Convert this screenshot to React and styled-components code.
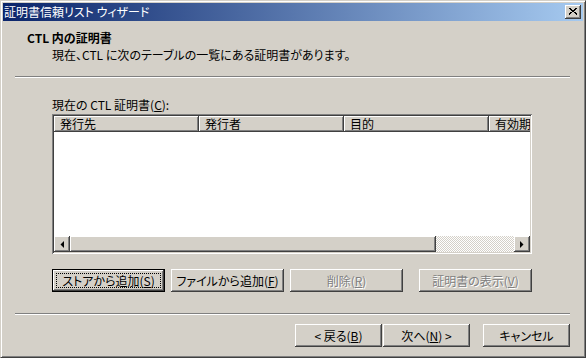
import React from 'react';
import styled, { createGlobalStyle } from 'styled-components';

const GlobalStyle = createGlobalStyle`
  html, body {
    margin: 0;
    padding: 0;
    background: #d4d0c8;
  }
`;

const raised = `
  box-shadow: inset -1px -1px #404040, inset 1px 1px #ffffff,
    inset -2px -2px #808080, inset 2px 2px #d4d0c8;
`;

const Window = styled.div`
  width: 586px;
  height: 358px;
  box-sizing: border-box;
  background: #d4d0c8;
  border: 1px solid;
  border-color: #d4d0c8 #404040 #404040 #d4d0c8;
  box-shadow: inset 1px 1px #ffffff, inset -1px -1px #808080;
  padding: 2px;
  display: flex;
  flex-direction: column;
  font-family: "Noto Sans CJK JP", sans-serif;
  font-size: 12px;
  font-feature-settings: "palt";
  color: #000;
`;

const TitleBar = styled.div`
  height: 18px;
  flex: none;
  display: flex;
  align-items: center;
  padding: 0 2px 0 1px;
  background: linear-gradient(to right, #0a246a, #a6caf0);
  color: #fff;
  line-height: 18px;
`;

const CloseButton = styled.div`
  margin-left: auto;
  width: 16px;
  height: 14px;
  background: #d4d0c8;
  ${raised}
  display: flex;
  align-items: center;
  justify-content: center;
  padding-bottom: 1px;
  box-sizing: border-box;
`;

const Header = styled.div`
  height: 55px;
  flex: none;
  box-sizing: border-box;
  padding: 9px 0 0 24px;
  line-height: 16px;
`;

const Heading = styled.div`
  font-weight: bold;
`;

const Subtitle = styled.div`
  margin-top: 1px;
  padding-left: 25px;
`;

const Separator = styled.div`
  flex: none;
  height: 0;
  border-top: 1px solid #808080;
  border-bottom: 1px solid #ffffff;
  margin: ${p => p.$top || 0}px 13px 0 12px;
`;

const Content = styled.div`
  padding: 19px 0 0 49px;
  line-height: 16px;
`;

const ListBox = styled.div`
  margin-top: 1px;
  width: 480px;
  height: 140px;
  box-sizing: border-box;
  padding: 2px;
  background: #fff;
  box-shadow: inset 1px 1px #808080, inset -1px -1px #ffffff,
    inset 2px 2px #404040, inset -2px -2px #d4d0c8;
  display: grid;
  grid-template-rows: 16px 1fr 16px;
  overflow: hidden;
`;

const HeaderRow = styled.div`
  display: flex;
  overflow: hidden;
  background: #d4d0c8;
`;

const ColumnHeader = styled.div`
  flex: 0 0 145px;
  height: 16px;
  box-sizing: border-box;
  padding-left: 6px;
  line-height: 16px;
  white-space: nowrap;
  overflow: hidden;
  ${raised}
`;

const ListBody = styled.div`
  background: #fff;
`;

const ScrollBar = styled.div`
  display: flex;
  height: 16px;
`;

const ArrowButton = styled.div`
  flex: 0 0 16px;
  height: 16px;
  background: #d4d0c8;
  ${raised}
  display: flex;
  align-items: center;
  justify-content: center;
`;

const Thumb = styled.div`
  flex: 0 0 366px;
  background: #d4d0c8;
  ${raised}
`;

const Track = styled.div`
  flex: 1;
  background: repeating-conic-gradient(#ffffff 0 25%, #d4d0c8 0 50%) 0 0 / 2px 2px;
`;

const ButtonRow = styled.div`
  display: flex;
  gap: 6px;
  margin-top: 15px;
`;

const Footer = styled.div`
  display: flex;
  justify-content: flex-end;
  gap: 1px;
  margin-top: 9px;
  padding-right: 13px;
`;

const Button = styled.button`
  position: relative;
  flex: none;
  width: ${p => p.$width || 113}px;
  height: 23px;
  margin-left: ${p => p.$gap || 0}px;
  padding: 0;
  border: none;
  background: #d4d0c8;
  font: inherit;
  font-size: 12px;
  font-feature-settings: "palt";
  line-height: 23px;
  white-space: nowrap;
  color: ${p => (p.disabled ? '#808080' : '#000')};
  text-shadow: ${p => (p.disabled ? '1px 1px #ffffff' : 'none')};
  ${raised}
  ${p =>
    p.$focused &&
    `
    box-shadow: inset 0 0 0 1px #000, inset -2px -2px #404040, inset 2px 2px #ffffff,
      inset -3px -3px #808080;
    &::after {
      content: '';
      position: absolute;
      inset: 4px;
      border: 1px dotted #000;
    }
  `}

  u {
    text-decoration: underline;
  }
`;

function CloseGlyph() {
  const rows = [0, 1, 2, 3, 4, 5, 6];
  return (
    <svg width="8" height="7" viewBox="0 0 8 7" shapeRendering="crispEdges">
      {rows.map(i => (
        <g key={i}>
          <rect x={i < 4 ? i : i + 1} y={i} width="2" height="1" fill="#000" />
          <rect x={i < 4 ? 6 - i : 5 - i} y={i} width="2" height="1" fill="#000" />
        </g>
      ))}
    </svg>
  );
}

function Arrow({ dir }) {
  const pts = dir === 'left' ? '4,0 4,7 0.5,3.5' : '0,0 0,7 3.5,3.5';
  return (
    <svg width="4" height="7" viewBox="0 0 4 7">
      <polygon points={pts} fill="#000" />
    </svg>
  );
}

const columns = ['発行先', '発行者', '目的', '有効期'];

export default function App() {
  return (
    <>
      <GlobalStyle />
      <Window>
        <TitleBar>
          <span>証明書信頼リスト ウィザード</span>
          <CloseButton>
            <CloseGlyph />
          </CloseButton>
        </TitleBar>

        <Header>
          <Heading>CTL 内の証明書</Heading>
          <Subtitle>現在、CTL に次のテーブルの一覧にある証明書があります。</Subtitle>
        </Header>

        <Separator />

        <Content>
          <div>
            現在の CTL 証明書(<u>C</u>):
          </div>
          <ListBox>
            <HeaderRow>
              {columns.map(c => (
                <ColumnHeader key={c}>{c}</ColumnHeader>
              ))}
            </HeaderRow>
            <ListBody />
            <ScrollBar>
              <ArrowButton>
                <Arrow dir="left" />
              </ArrowButton>
              <Thumb />
              <Track />
              <ArrowButton>
                <Arrow dir="right" />
              </ArrowButton>
            </ScrollBar>
          </ListBox>

          <ButtonRow>
            <Button $focused>
              ストアから追加(<u>S</u>)
            </Button>
            <Button>
              ファイルから追加(<u>F</u>)
            </Button>
            <Button disabled>
              削除(<u>R</u>)
            </Button>
            <Button disabled $gap={10}>
              証明書の表示(<u>V</u>)
            </Button>
          </ButtonRow>
        </Content>

        <Separator $top={21} />

        <Footer>
          <Button $width={87}>
            &lt; 戻る(<u>B</u>)
          </Button>
          <Button $width={87}>
            次へ(<u>N</u>) &gt;
          </Button>
          <Button $width={87} $gap={12}>
            キャンセル
          </Button>
        </Footer>
      </Window>
    </>
  );
}
